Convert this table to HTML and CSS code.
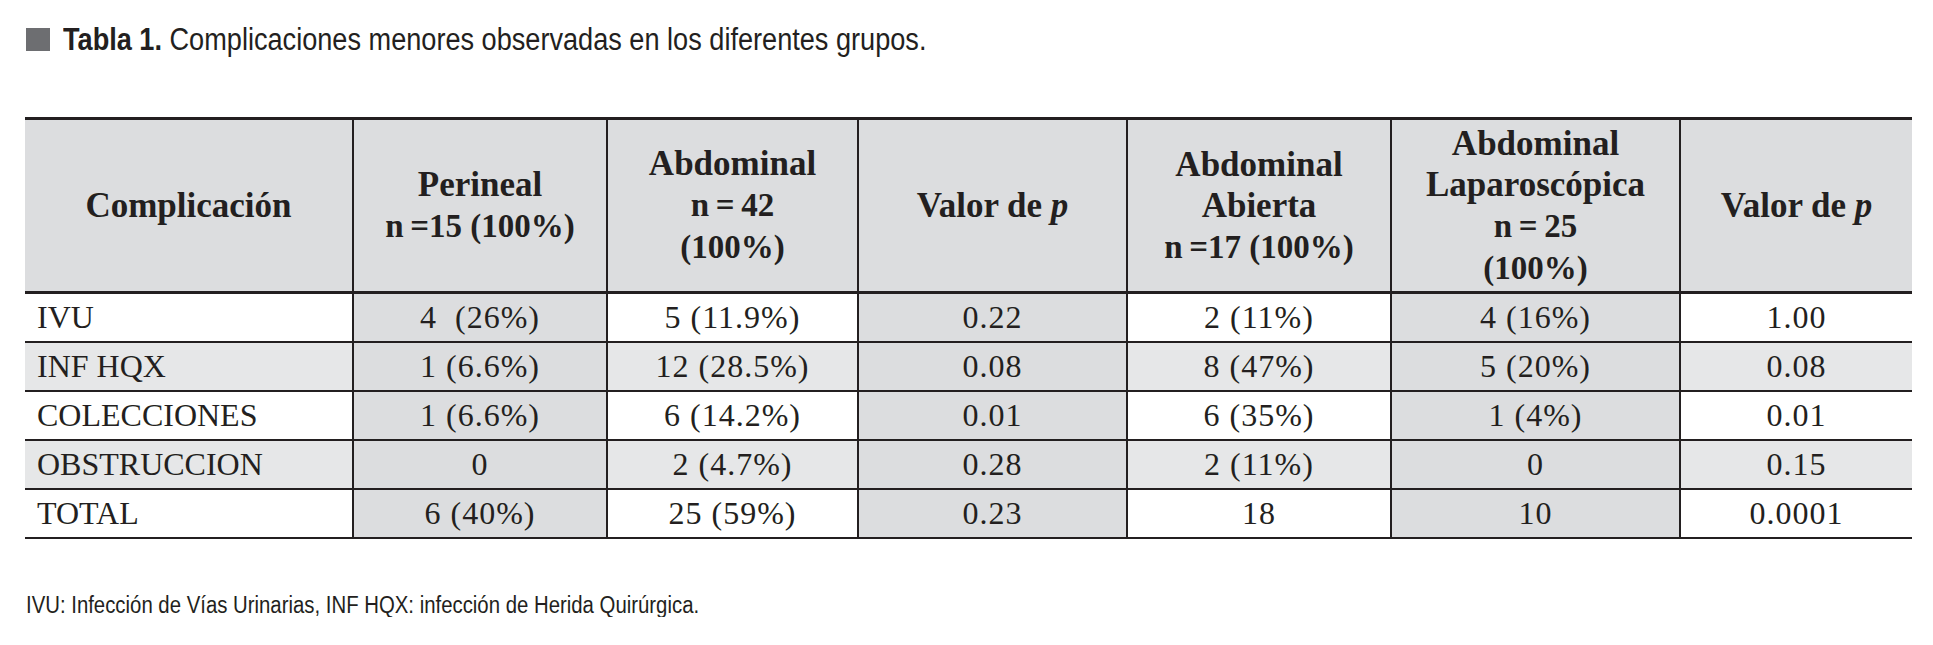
FILE: index.html
```html
<!DOCTYPE html>
<html lang="es">
<head>
<meta charset="utf-8">
<title>Tabla 1</title>
<link rel="stylesheet" href="styles.css">
</head>
<body>
<div class="page">
  <h1 class="title"><span class="sq"></span><span class="title-text"><b>Tabla 1.</b> Complicaciones menores observadas en los diferentes grupos.</span></h1>
  <table class="tbl">
    <colgroup>
      <col class="c1"><col class="c2"><col class="c3"><col class="c4"><col class="c5"><col class="c6"><col class="c7">
    </colgroup>
    <thead>
      <tr>
        <th>Complicación</th>
        <th>Perineal<br><span class="n">n&#8201;=15 (100%)</span></th>
        <th>Abdominal<br><span class="n">n&#8201;=&#8201;42</span><br><span class="n">(100%)</span></th>
        <th>Valor de <i>p</i></th>
        <th>Abdominal<br>Abierta<br><span class="n">n&#8201;=17 (100%)</span></th>
        <th>Abdominal<br>Laparoscópica<br><span class="n">n&#8201;=&#8201;25</span><br><span class="n">(100%)</span></th>
        <th>Valor de <i>p</i></th>
      </tr>
    </thead>
    <tbody>
      <tr>
        <td class="lbl">IVU</td><td class="dk">4&nbsp; (26%)</td><td>5 (11.9%)</td><td class="dk">0.22</td><td>2 (11%)</td><td class="dk">4 (16%)</td><td>1.00</td>
      </tr>
      <tr class="alt">
        <td class="lbl">INF HQX</td><td class="dk">1 (6.6%)</td><td>12 (28.5%)</td><td class="dk">0.08</td><td>8 (47%)</td><td class="dk">5 (20%)</td><td>0.08</td>
      </tr>
      <tr>
        <td class="lbl">COLECCIONES</td><td class="dk">1 (6.6%)</td><td>6 (14.2%)</td><td class="dk">0.01</td><td>6 (35%)</td><td class="dk">1 (4%)</td><td>0.01</td>
      </tr>
      <tr class="alt">
        <td class="lbl">OBSTRUCCION</td><td class="dk">0</td><td>2 (4.7%)</td><td class="dk">0.28</td><td>2 (11%)</td><td class="dk">0</td><td>0.15</td>
      </tr>
      <tr>
        <td class="lbl">TOTAL</td><td class="dk">6 (40%)</td><td>25 (59%)</td><td class="dk">0.23</td><td>18</td><td class="dk">10</td><td>0.0001</td>
      </tr>
    </tbody>
  </table>
  <p class="note"><span class="note-text">IVU: Infección de Vías Urinarias, INF HQX: infección de Herida Quirúrgica.</span></p>
</div>
</body>
</html>
```
FILE: styles.css
```css
html, body {
  margin: 0;
  padding: 0;
  background: #ffffff;
}

.page {
  padding: 28px 21px 0 25px;
  color: #231f20;
}

.title {
  display: flex;
  align-items: center;
  gap: 13px;
  margin: 0 0 0 1px;
  height: 23px;
  font-family: "Liberation Sans Narrow", "Liberation Sans", Arial, sans-serif;
  font-weight: 400;
  font-size: 31px;
  line-height: 23px;
  color: #231f20;
  white-space: nowrap;
}

.title-text {
  display: inline-block;
  transform: scaleX(0.875);
  transform-origin: left center;
}

.title b {
  font-weight: 700;
}

.sq {
  display: block;
  width: 24px;
  height: 23px;
  background: #6d6e71;
  flex: none;
}

.tbl {
  margin-top: 66px;
  width: 1887px;
  border-collapse: collapse;
  table-layout: fixed;
  font-family: "Liberation Serif", "Times New Roman", serif;
  font-size: 32px;
  color: #231f20;
  border-top: 3px solid #231f20;
  border-bottom: 2px solid #231f20;
}

.c1 { width: 328px; }
.c2 { width: 254px; }
.c3 { width: 251px; }
.c4 { width: 269px; }
.c5 { width: 264px; }
.c6 { width: 289px; }
.c7 { width: 232px; }

.tbl th {
  background: #dcdddf;
  font-weight: 700;
  font-size: 35px;
  line-height: 41px;
  height: 171px;
  padding: 0 2px;
  text-align: center;
  vertical-align: middle;
  border-left: 2px solid #231f20;
  border-bottom: 3px solid #231f20;
  white-space: nowrap;
}

.tbl th .n {
  font-size: 33px;
}

.tbl th i {
  font-style: italic;
}

.tbl td {
  height: 47px;
  padding: 0 2px;
  line-height: 47px;
  text-align: center;
  vertical-align: middle;
  letter-spacing: 1px;
  border-left: 2px solid #231f20;
  border-bottom: 2px solid #231f20;
  background: #ffffff;
  white-space: nowrap;
}

.tbl th:first-child,
.tbl td:first-child {
  border-left: none;
}

.tbl td.lbl {
  text-align: left;
  padding-left: 12px;
  letter-spacing: 0;
}

.tbl tr.alt td {
  background: #e6e7e8;
}

.tbl td.dk,
.tbl tr.alt td.dk {
  background: #dcdddf;
}

.note {
  margin: 54px 0 0 1px;
  font-family: "Liberation Sans Narrow", "Liberation Sans", Arial, sans-serif;
  font-size: 23px;
  line-height: 24px;
  color: #231f20;
  white-space: nowrap;
}

.note-text {
  display: inline-block;
  transform: scaleX(0.885);
  transform-origin: left center;
}
```
